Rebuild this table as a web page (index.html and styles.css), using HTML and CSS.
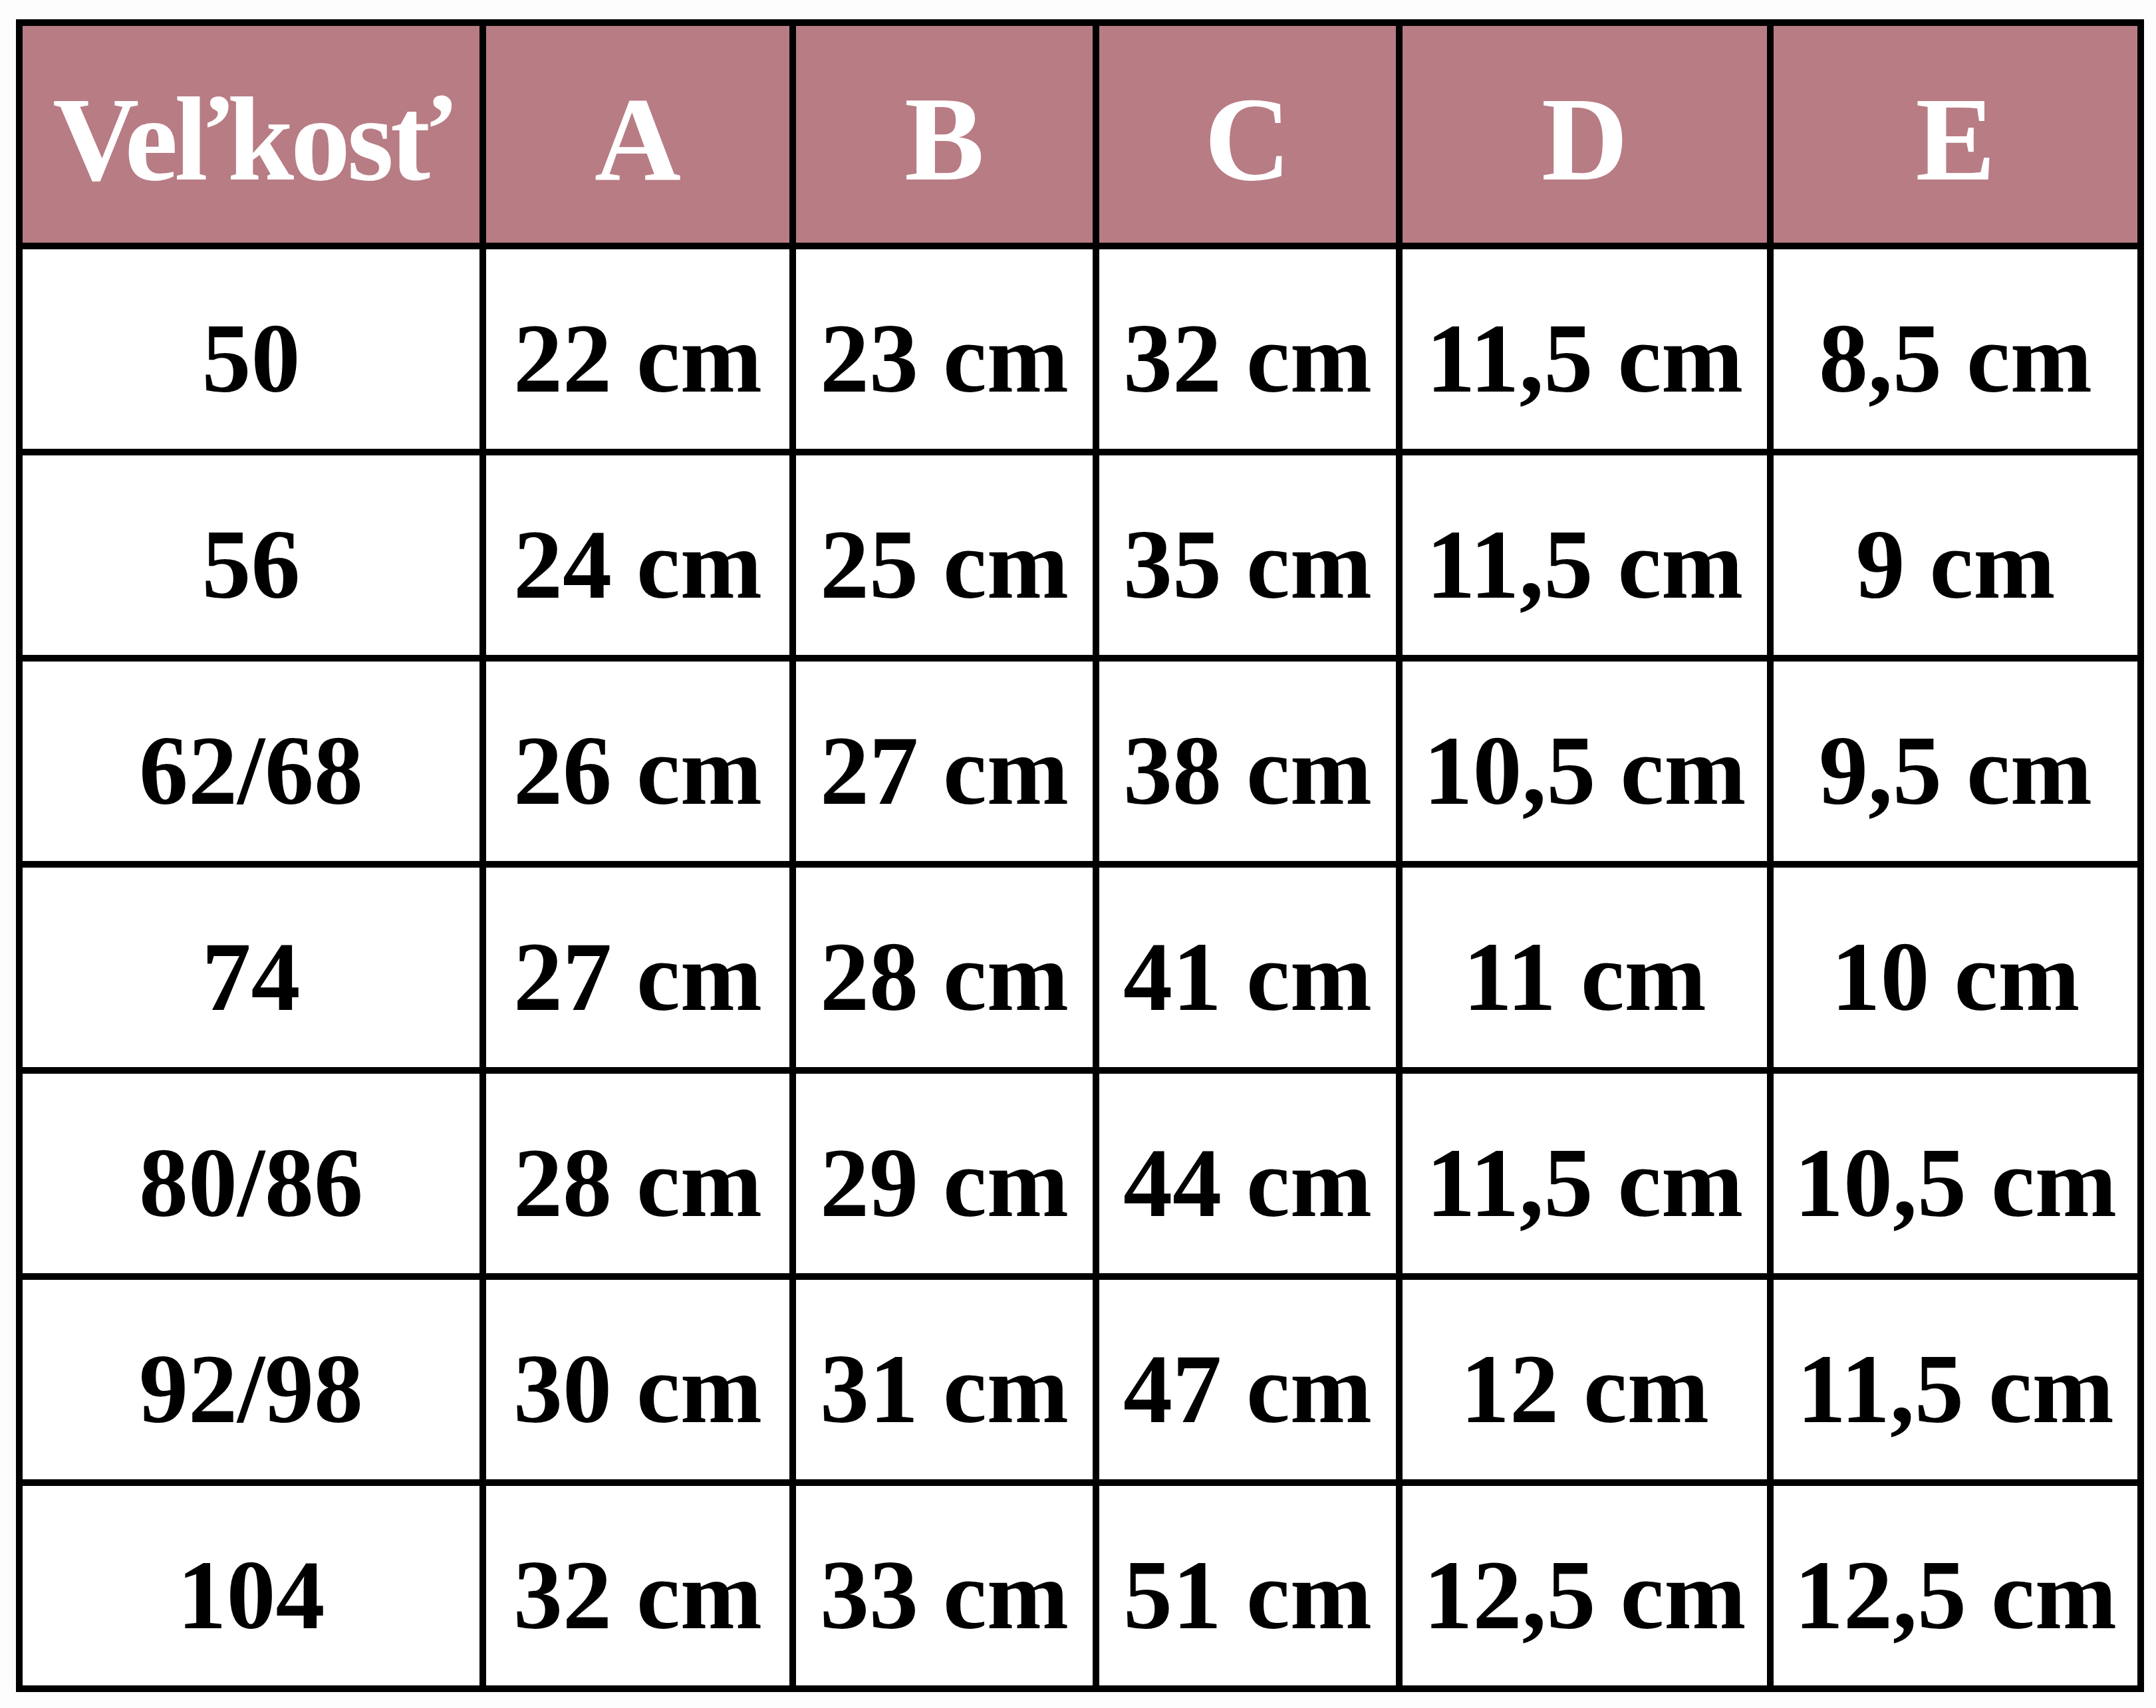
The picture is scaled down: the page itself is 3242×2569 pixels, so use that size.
FILE: index.html
```html
<!DOCTYPE html>
<html lang="sk">
<head>
<meta charset="utf-8">
<title>Veľkosť</title>
<link rel="stylesheet" href="styles.css">
</head>
<body>
<div class="sheet">
  <div class="grid">
    <div class="cell head head-wide">Veľkosť</div>
    <div class="cell head">A</div>
    <div class="cell head">B</div>
    <div class="cell head">C</div>
    <div class="cell head">D</div>
    <div class="cell head">E</div>

    <div class="cell">50</div><div class="cell">22 cm</div><div class="cell">23 cm</div><div class="cell">32 cm</div><div class="cell">11,5 cm</div><div class="cell">8,5 cm</div>
    <div class="cell">56</div><div class="cell">24 cm</div><div class="cell">25 cm</div><div class="cell">35 cm</div><div class="cell">11,5 cm</div><div class="cell">9 cm</div>
    <div class="cell">62/68</div><div class="cell">26 cm</div><div class="cell">27 cm</div><div class="cell">38 cm</div><div class="cell">10,5 cm</div><div class="cell">9,5 cm</div>
    <div class="cell">74</div><div class="cell">27 cm</div><div class="cell">28 cm</div><div class="cell">41 cm</div><div class="cell">11 cm</div><div class="cell">10 cm</div>
    <div class="cell">80/86</div><div class="cell">28 cm</div><div class="cell">29 cm</div><div class="cell">44 cm</div><div class="cell">11,5 cm</div><div class="cell">10,5 cm</div>
    <div class="cell">92/98</div><div class="cell">30 cm</div><div class="cell">31 cm</div><div class="cell">47 cm</div><div class="cell">12 cm</div><div class="cell">11,5 cm</div>
    <div class="cell">104</div><div class="cell">32 cm</div><div class="cell">33 cm</div><div class="cell">51 cm</div><div class="cell">12,5 cm</div><div class="cell">12,5 cm</div>
  </div>
</div>
</body>
</html>
```
FILE: styles.css
```css
html, body {
  margin: 0;
  padding: 0;
  background: #fdfdfd;
}

.sheet {
  padding: 29px 0 0 24px;
}

.grid {
  display: inline-grid;
  grid-template-columns: 687px 456px 446px 446px 548px 547px;
  grid-template-rows: 326px repeat(7, 300px);
  gap: 10px;
  padding: 10px;
  background: #000;
}

.cell {
  display: flex;
  align-items: center;
  justify-content: center;
  box-sizing: border-box;
  padding-top: 28px;
  background: #fff;
  color: #000;
  font-family: "Liberation Serif", "Times New Roman", serif;
  font-weight: bold;
  font-size: 148px;
  font-variant-numeric: oldstyle-nums;
  line-height: 1;
  white-space: nowrap;
}

.head {
  background: #b87c84;
  color: #fff;
  font-size: 180px;
  padding-top: 16px;
}

.head-wide {
  letter-spacing: -5px;
}
```
